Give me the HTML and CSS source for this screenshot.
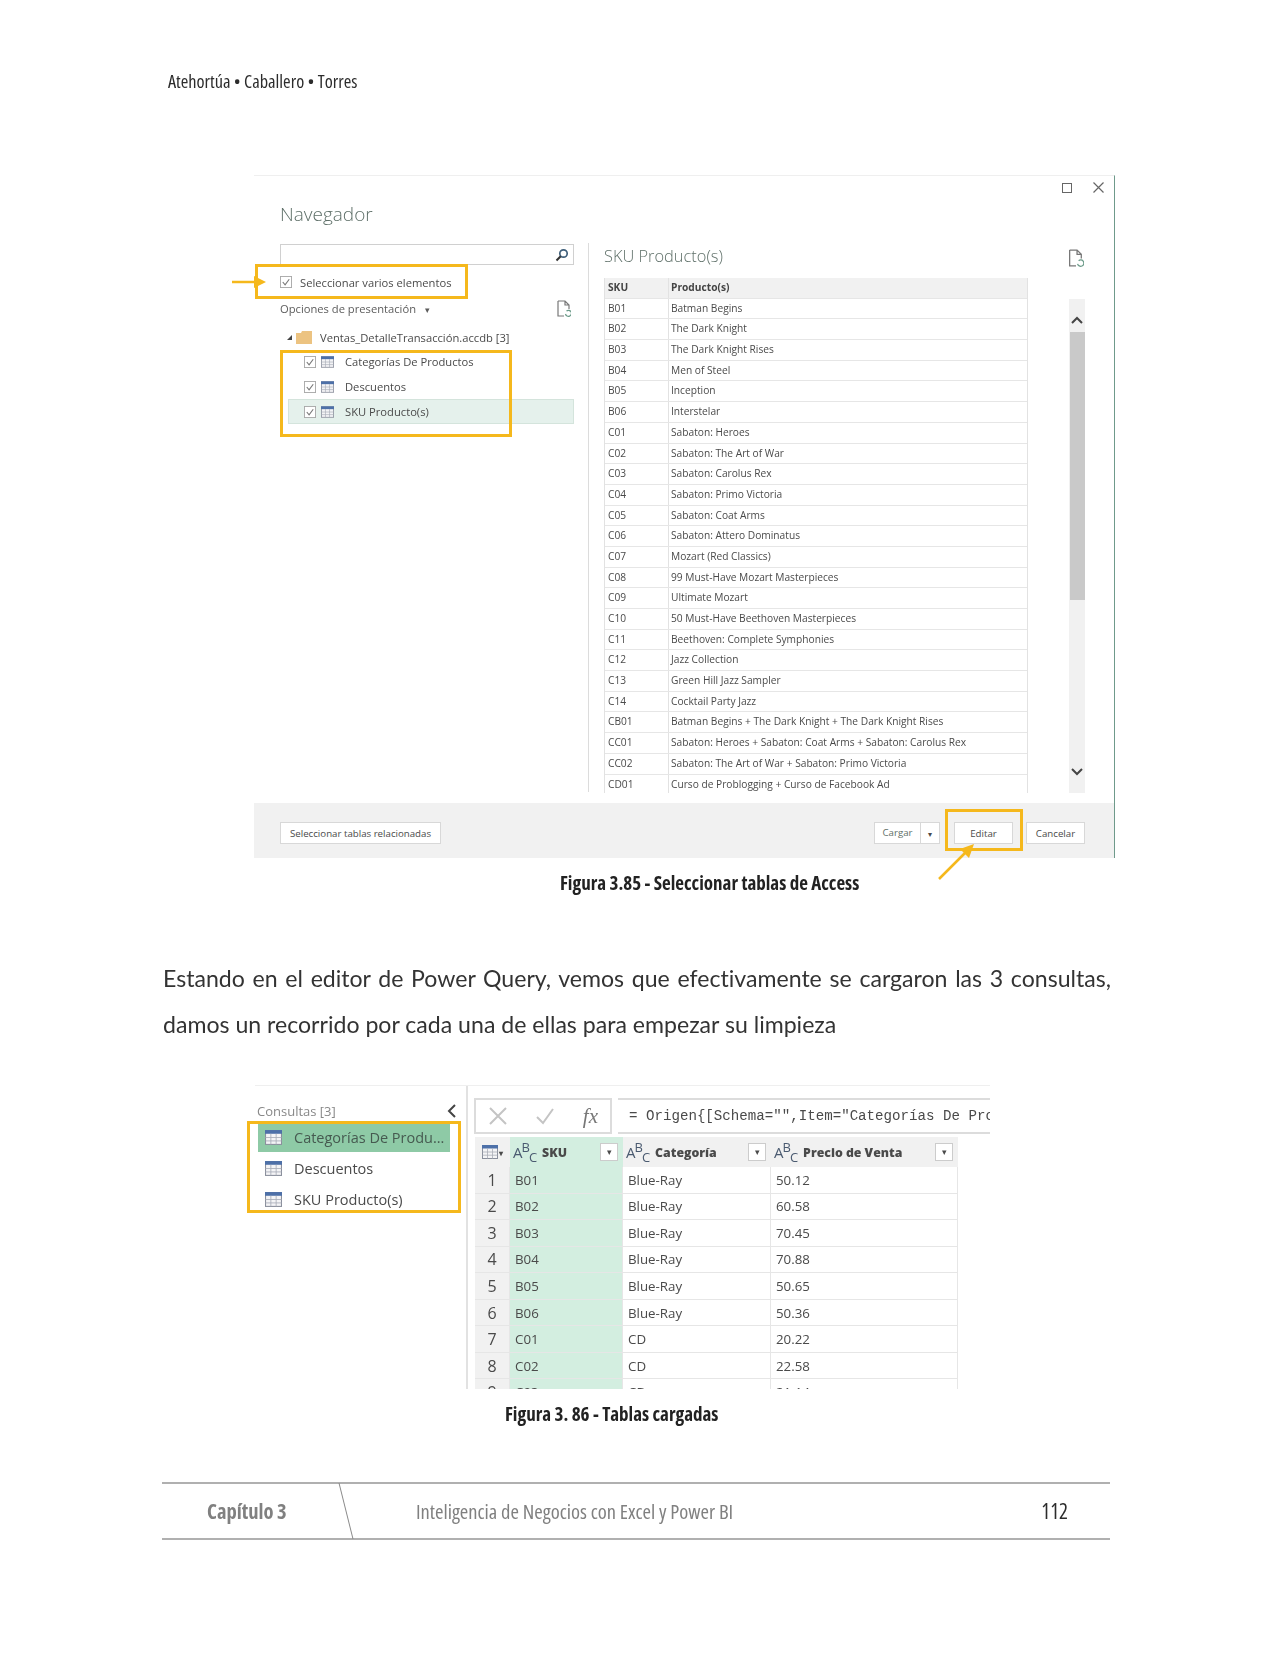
FILE: index.html
```html
<!DOCTYPE html>
<html lang="es">
<head>
  <meta charset="UTF-8">
  <title>Inteligencia de Negocios con Excel y Power BI - 112</title>
  <link rel="stylesheet" href="styles.css">
</head>
<body>

  <svg class="sprite" width="0" height="0">
    <symbol id="tbl" viewBox="0 0 16 14">
      <rect x="0.5" y="0.5" width="15" height="13" fill="#f4f4f6" stroke="#8a8f9c"/>
      <rect x="0" y="0" width="16" height="3.5" fill="#4d70a8"/>
      <path d="M5.5 3.5V13.5M10.5 3.5V13.5M0.5 7H15.5M0.5 10.2H15.5" stroke="#a9adb8" stroke-width="0.8" fill="none"/>
    </symbol>
    <symbol id="chk" viewBox="0 0 13 13">
      <rect x="0.5" y="0.5" width="12" height="12" fill="#fff" stroke="#a8a8a8"/>
      <path d="M3 6.5L5.5 9.5L10 3.5" stroke="#777" stroke-width="1.2" fill="none"/>
    </symbol>
    <symbol id="doc" viewBox="0 0 14 17">
      <path d="M1 1H8L12 5V9M1 1V16H7M8 1V5H12" stroke="#777" stroke-width="1.2" fill="none"/>
      <path d="M8.5 14a3 3 0 1 0 1-3" stroke="#6a9a88" stroke-width="1.2" fill="none"/>
    </symbol>
  </svg>

  <div class="page">
    <header class="running-head narrow">Atehortúa • Caballero • Torres</header>

    <div class="navigator shot">
      <div class="win-btns">
        <span class="win-max"></span>
        <svg class="win-close" width="11" height="11" viewBox="0 0 11 11"><path d="M0.5 0.5L10.5 10.5M10.5 0.5L0.5 10.5" stroke="#666" stroke-width="1.2"/></svg>
      </div>

      <div class="nav-body">
        <div class="nav-left">
          <h1 class="nav-title">Navegador</h1>
          <div class="search-box">
            <svg width="14" height="14" viewBox="0 0 14 14"><circle cx="8.5" cy="5.5" r="3.7" fill="none" stroke="#3f5f7a" stroke-width="1.7"/><path d="M5.7 8.3L1.5 12.5" stroke="#333" stroke-width="2"/></svg>
          </div>
          <div class="multi-select">
            <svg class="ico-chk"><use href="#chk"/></svg>
            <span>Seleccionar varios elementos</span>
          </div>
          <div class="view-options">
            <span>Opciones de presentación <i class="caret">▾</i></span>
            <svg class="ico-doc"><use href="#doc"/></svg>
          </div>
          <div class="tree-root">
            <i class="tree-arrow"></i>
            <svg class="ico-folder" width="16" height="13" viewBox="0 0 16 13"><path d="M0 2H5L6 0H16V13H0Z" fill="#ecc381"/></svg>
            <span>Ventas_DetalleTransacción.accdb [3]</span>
          </div>
          <div class="tree-row">
            <svg class="ico-chk"><use href="#chk"/></svg>
            <svg class="ico-tbl"><use href="#tbl"/></svg>
            <span>Categorías De Productos</span>
          </div>
          <div class="tree-row">
            <svg class="ico-chk"><use href="#chk"/></svg>
            <svg class="ico-tbl"><use href="#tbl"/></svg>
            <span>Descuentos</span>
          </div>
          <div class="tree-row selected">
            <svg class="ico-chk"><use href="#chk"/></svg>
            <svg class="ico-tbl"><use href="#tbl"/></svg>
            <span>SKU Producto(s)</span>
          </div>
        </div>

        <div class="nav-right">
          <div class="preview-head">
            <h2>SKU Producto(s)</h2>
            <svg class="ico-doc big"><use href="#doc"/></svg>
          </div>
          <div class="preview-body">
            <div class="sku-table">
              <div class="sku-row head"><span>SKU</span><span>Producto(s)</span></div>
              <div class="sku-row"><span>B01</span><span>Batman Begins</span></div>
              <div class="sku-row"><span>B02</span><span>The Dark Knight</span></div>
              <div class="sku-row"><span>B03</span><span>The Dark Knight Rises</span></div>
              <div class="sku-row"><span>B04</span><span>Men of Steel</span></div>
              <div class="sku-row"><span>B05</span><span>Inception</span></div>
              <div class="sku-row"><span>B06</span><span>Interstelar</span></div>
              <div class="sku-row"><span>C01</span><span>Sabaton: Heroes</span></div>
              <div class="sku-row"><span>C02</span><span>Sabaton: The Art of War</span></div>
              <div class="sku-row"><span>C03</span><span>Sabaton: Carolus Rex</span></div>
              <div class="sku-row"><span>C04</span><span>Sabaton: Primo Victoria</span></div>
              <div class="sku-row"><span>C05</span><span>Sabaton: Coat Arms</span></div>
              <div class="sku-row"><span>C06</span><span>Sabaton: Attero Dominatus</span></div>
              <div class="sku-row"><span>C07</span><span>Mozart (Red Classics)</span></div>
              <div class="sku-row"><span>C08</span><span>99 Must-Have Mozart Masterpieces</span></div>
              <div class="sku-row"><span>C09</span><span>Ultimate Mozart</span></div>
              <div class="sku-row"><span>C10</span><span>50 Must-Have Beethoven Masterpieces</span></div>
              <div class="sku-row"><span>C11</span><span>Beethoven: Complete Symphonies</span></div>
              <div class="sku-row"><span>C12</span><span>Jazz Collection</span></div>
              <div class="sku-row"><span>C13</span><span>Green Hill Jazz Sampler</span></div>
              <div class="sku-row"><span>C14</span><span>Cocktail Party Jazz</span></div>
              <div class="sku-row"><span>CB01</span><span>Batman Begins + The Dark Knight + The Dark Knight Rises</span></div>
              <div class="sku-row"><span>CC01</span><span>Sabaton: Heroes + Sabaton: Coat Arms + Sabaton: Carolus Rex</span></div>
              <div class="sku-row"><span>CC02</span><span>Sabaton: The Art of War + Sabaton: Primo Victoria</span></div>
              <div class="sku-row"><span>CD01</span><span>Curso de Problogging + Curso de Facebook Ad</span></div>
            </div>
            <div class="scrollbar">
              <svg width="12" height="8" viewBox="0 0 12 8"><path d="M1 7L6 2L11 7" stroke="#444" stroke-width="2" fill="none"/></svg>
              <div class="scroll-thumb"></div>
              <svg width="12" height="8" viewBox="0 0 12 8"><path d="M1 1L6 6L11 1" stroke="#444" stroke-width="2" fill="none"/></svg>
            </div>
          </div>
        </div>
      </div>

      <div class="nav-foot">
        <span class="btn related">Seleccionar tablas relacionadas</span>
        <span class="btn load"><b>Cargar</b><i class="caret">▾</i></span>
        <span class="btn edit">Editar</span>
        <span class="btn cancel">Cancelar</span>
      </div>

      <!-- anotaciones amarillas -->
      <div class="mark mark-select"></div>
      <div class="mark mark-tables"></div>
      <div class="mark mark-edit"></div>
      <svg class="arrow arrow-select" width="36" height="14" viewBox="0 0 36 14"><path d="M0 7H24" stroke="#f5b81c" stroke-width="2.5"/><path d="M22 1L34 7L22 13Z" fill="#f5b81c"/></svg>
      <svg class="arrow arrow-edit" width="40" height="38" viewBox="0 0 40 38"><path d="M2 36L30 8" stroke="#f5b81c" stroke-width="2.5"/><path d="M37 1L32 15L23 6Z" fill="#f5b81c"/></svg>
    </div>

    <p class="caption narrow cap-access">Figura 3.85 - Seleccionar tablas de Access</p>

    <p class="body-text">Estando en el editor de Power Query, vemos que efectivamente se cargaron las 3 consultas, damos un recorrido por cada una de ellas para empezar su limpieza</p>

    <div class="query-editor shot">
      <div class="query-pane">
        <div class="query-head">
          <span>Consultas [3]</span>
          <svg width="10" height="14" viewBox="0 0 10 14"><path d="M8 1L2 7L8 13" stroke="#444" stroke-width="2" fill="none"/></svg>
        </div>
        <div class="query-item active"><svg class="ico-tbl q"><use href="#tbl"/></svg><span>Categorías De Produ...</span></div>
        <div class="query-item"><svg class="ico-tbl q"><use href="#tbl"/></svg><span>Descuentos</span></div>
        <div class="query-item"><svg class="ico-tbl q"><use href="#tbl"/></svg><span>SKU Producto(s)</span></div>
        <div class="mark mark-queries"></div>
      </div>

      <div class="query-main">
        <div class="formula-bar">
          <div class="formula-btns">
            <svg width="20" height="18" viewBox="0 0 20 18"><path d="M2 1L18 17M18 1L2 17" stroke="#c4c4c4" stroke-width="2"/></svg>
            <svg width="20" height="18" viewBox="0 0 20 18"><path d="M2 10L8 16L18 2" stroke="#c4c4c4" stroke-width="2" fill="none"/></svg>
            <span class="fx">fx</span>
          </div>
          <div class="formula">= Origen{[Schema="",Item="Categorías De Productos",Kind="Table"]}[Data]</div>
        </div>

        <div class="grid-wrap">
          <div class="grid-row grid-head">
            <div class="cell idx">
              <svg class="ico-tbl g"><use href="#tbl"/></svg><i class="caret">▾</i>
            </div>
            <div class="cell sku"><span class="abc">A<sup>B</sup><sub>C</sub></span><b>SKU</b><i class="filter">▾</i></div>
            <div class="cell"><span class="abc">A<sup>B</sup><sub>C</sub></span><b>Categoría</b><i class="filter">▾</i></div>
            <div class="cell"><span class="abc">A<sup>B</sup><sub>C</sub></span><b>Precio de Venta</b><i class="filter">▾</i></div>
          </div>
          <div class="grid-row"><div class="cell idx">1</div><div class="cell sku">B01</div><div class="cell">Blue-Ray</div><div class="cell">50.12</div></div>
          <div class="grid-row"><div class="cell idx">2</div><div class="cell sku">B02</div><div class="cell">Blue-Ray</div><div class="cell">60.58</div></div>
          <div class="grid-row"><div class="cell idx">3</div><div class="cell sku">B03</div><div class="cell">Blue-Ray</div><div class="cell">70.45</div></div>
          <div class="grid-row"><div class="cell idx">4</div><div class="cell sku">B04</div><div class="cell">Blue-Ray</div><div class="cell">70.88</div></div>
          <div class="grid-row"><div class="cell idx">5</div><div class="cell sku">B05</div><div class="cell">Blue-Ray</div><div class="cell">50.65</div></div>
          <div class="grid-row"><div class="cell idx">6</div><div class="cell sku">B06</div><div class="cell">Blue-Ray</div><div class="cell">50.36</div></div>
          <div class="grid-row"><div class="cell idx">7</div><div class="cell sku">C01</div><div class="cell">CD</div><div class="cell">20.22</div></div>
          <div class="grid-row"><div class="cell idx">8</div><div class="cell sku">C02</div><div class="cell">CD</div><div class="cell">22.58</div></div>
          <div class="grid-row"><div class="cell idx">9</div><div class="cell sku">C03</div><div class="cell">CD</div><div class="cell">21.14</div></div>
        </div>
      </div>
    </div>

    <p class="caption narrow cap-tables">Figura 3. 86 - Tablas cargadas</p>

    <footer class="page-foot narrow">
      <span class="chapter">Capítulo 3</span>
      <svg class="slash" width="16" height="56" viewBox="0 0 16 56"><path d="M1 0L15 56" stroke="#8a8a8a" stroke-width="1"/></svg>
      <span class="book">Inteligencia de Negocios con Excel y Power BI</span>
      <span class="folio">112</span>
    </footer>
  </div>

</body>
</html>
```

FILE: styles.css
```css
* {
  margin: 0;
  padding: 0;
  box-sizing: border-box;
}

body {
  background: #fff;
  font-family: 'Open Sans', 'Liberation Sans', sans-serif;
  color: #333;
}

i {
  font-style: normal;
}

.sprite {
  position: absolute;
}

.page {
  width: 1280px;
  height: 1656px;
  padding-top: 70px;
  overflow: hidden;
  filter: blur(0.3px);
}

.narrow {
  font-family: 'Open Sans', 'Noto Sans', sans-serif;
  font-stretch: 75%;
}

.shot {
  filter: blur(0.7px);
}

.running-head {
  height: 22px;
  margin-left: 168px;
  font-size: 18.3px;
  line-height: 22px;
  color: #2c2c2c;
}

/* Navegador */
.navigator {
  position: relative;
  width: 861px;
  height: 683px;
  margin: 83px 0 0 254px;
  border-top: 1px solid #efefef;
  border-right: 1.5px solid #6f9a8b;
  display: flex;
  flex-direction: column;
}

.win-btns {
  position: absolute;
  top: 6px;
  right: 10px;
  display: flex;
  align-items: center;
  gap: 21px;
}

.win-max {
  width: 10px;
  height: 10px;
  border: 1px solid #666;
}

.nav-body {
  flex: 1;
  display: flex;
  padding-left: 26px;
}

.nav-left {
  width: 294px;
  padding-top: 26px;
  font-size: 11.2px;
  color: #4a4a4a;
}

.nav-title {
  height: 24px;
  font-size: 19px;
  font-weight: 300;
  line-height: 24px;
  color: #5f7069;
}

.search-box {
  height: 21px;
  margin-top: 18px;
  padding-right: 4px;
  border: 1px solid #d0d0d0;
  display: flex;
  align-items: center;
  justify-content: flex-end;
}

.multi-select {
  height: 20px;
  margin-top: 7px;
  display: flex;
  align-items: center;
  gap: 8px;
}

.ico-chk {
  width: 12px;
  height: 12px;
  flex: none;
}

.view-options {
  height: 18px;
  margin-top: 7px;
  padding-right: 3px;
  display: flex;
  align-items: center;
  justify-content: space-between;
  color: #5c5c5c;
}

.caret {
  font-size: 9px;
  margin-left: 6px;
}

.ico-doc {
  width: 14px;
  height: 17px;
}

.ico-doc.big {
  width: 16px;
  height: 18px;
}

.tree-root {
  height: 20px;
  margin-top: 10px;
  margin-bottom: 2px;
  padding-left: 7px;
  display: flex;
  align-items: center;
}

.tree-arrow {
  width: 0;
  height: 0;
  border-bottom: 5px solid #444;
  border-left: 5px solid transparent;
  margin-right: 4px;
}

.ico-folder {
  margin-right: 8px;
}

.tree-row {
  height: 25px;
  margin-left: 8px;
  padding-left: 16px;
  display: flex;
  align-items: center;
}

.tree-row.selected {
  background: #e5f1ec;
  border: 1px solid #d4e4dc;
  padding-left: 15px;
}

.ico-tbl {
  width: 13px;
  height: 12px;
  margin-left: 5px;
  margin-right: 11px;
  flex: none;
}

.nav-right {
  width: 497px;
  height: 549px;
  margin: 67px 0 0 14px;
  padding-left: 15px;
  border-left: 1px solid #dcdcdc;
}

.preview-head {
  width: 480px;
  height: 35px;
  display: flex;
  align-items: center;
  justify-content: space-between;
}

.preview-head h2 {
  font-size: 16.4px;
  font-weight: 300;
  color: #5f7069;
  margin-top: -10px;
}

.preview-head .ico-doc {
  margin-top: -6px;
}

.preview-body {
  width: 481px;
  height: 515px;
  display: flex;
  justify-content: space-between;
}

.sku-table {
  width: 424px;
  height: 515px;
  overflow: hidden;
  border-left: 1px solid #e2e2e2;
  border-right: 1px solid #e2e2e2;
  font-size: 10.2px;
  color: #4a4a4a;
}

.sku-row {
  display: grid;
  grid-template-columns: 63px 1fr;
  height: 20.7px;
  border-bottom: 1.5px solid #e6e6e6;
  line-height: 19.5px;
  white-space: nowrap;
}

.sku-row span {
  padding-left: 3px;
}

.sku-row span + span {
  border-left: 1px solid #e2e2e2;
  padding-left: 2px;
}

.sku-row.head {
  background: #f1f1f1;
  font-weight: 700;
  color: #444;
}

.scrollbar {
  width: 16px;
  height: 494px;
  margin-top: 21px;
  background: #f1f1f1;
  display: flex;
  flex-direction: column;
  align-items: center;
  padding-top: 17px;
}

.scroll-thumb {
  width: 15px;
  height: 268px;
  margin-top: 8px;
  margin-bottom: 168px;
  background: #c9c9c9;
}

.nav-foot {
  height: 55px;
  padding: 5px 29px 0 26px;
  background: #f1f1f1;
  display: flex;
  align-items: center;
  font-size: 9.7px;
  color: #4a4a4a;
}

.btn {
  height: 22px;
  background: #fff;
  border: 1px solid #d8d8d8;
  display: flex;
  align-items: center;
  justify-content: center;
}

.related {
  width: 161px;
  margin-right: auto;
}

.load {
  width: 66px;
  margin-right: 14px;
}

.load b {
  font-weight: 400;
  flex: 1;
  text-align: center;
  color: #5f7069;
  border-right: 1px solid #d8d8d8;
  line-height: 20px;
}

.load .caret {
  width: 18px;
  margin: 0;
  text-align: center;
  font-size: 8px;
}

.edit {
  width: 59px;
  margin-right: 13px;
}

.cancel {
  width: 59px;
}

/* marcos amarillos sobre las capturas */
.mark {
  position: absolute;
  border: 3px solid #f5b81c;
}

.mark-select {
  left: 1px;
  top: 88px;
  width: 213px;
  height: 35px;
}

.mark-tables {
  left: 26px;
  top: 174px;
  width: 232px;
  height: 87px;
}

.mark-edit {
  left: 691px;
  top: 633px;
  width: 78px;
  height: 42px;
}

.mark-queries {
  left: -8px;
  top: 35px;
  width: 214px;
  height: 92px;
}

.arrow {
  position: absolute;
}

.arrow-select {
  left: -22px;
  top: 99px;
}

.arrow-edit {
  left: 683px;
  top: 667px;
}

.caption {
  height: 24px;
  font-size: 19px;
  font-weight: 700;
  line-height: 24px;
  color: #222;
  white-space: nowrap;
}

.cap-access {
  margin: 13px 0 0 560px;
}

.cap-tables {
  margin: 13px 0 0 505px;
}

.body-text {
  width: 948px;
  margin: 60px 0 0 163px;
  font-family: 'Lato', sans-serif;
  font-size: 23.1px;
  font-variant-ligatures: none;
  line-height: 46px;
  text-align: justify;
  color: #333;
}

/* Power Query */
.query-editor {
  width: 735px;
  height: 304px;
  margin: 38px 0 0 255px;
  border-top: 1px solid #efefef;
  display: flex;
}

.query-pane {
  position: relative;
  width: 213px;
  border-right: 2px solid #e2e2e2;
  font-size: 14.5px;
  color: #4a4a4a;
}

.query-head {
  height: 24px;
  margin-top: 13px;
  padding: 0 9px 0 2px;
  display: flex;
  align-items: center;
  justify-content: space-between;
  font-size: 13px;
  color: #888;
}

.query-item {
  width: 192px;
  height: 30.5px;
  margin-left: 3px;
  padding-left: 7px;
  display: flex;
  align-items: center;
  white-space: nowrap;
}

.query-item.active {
  background: #8ecaa6;
  height: 29px;
  margin-bottom: 1.5px;
  color: #465a50;
}

.ico-tbl.q {
  width: 17px;
  height: 15px;
  margin-left: 0;
  margin-right: 12px;
}

.query-main {
  width: 522px;
  padding: 12px 0 0 6px;
}

.formula-bar {
  height: 36px;
  display: flex;
  gap: 6px;
}

.formula-btns {
  width: 138px;
  border: 2px solid #dcdcdc;
  display: flex;
  align-items: center;
  justify-content: space-between;
  padding: 0 12px;
}

.fx {
  font-family: 'Liberation Serif', serif;
  font-style: italic;
  font-size: 21px;
  color: #777;
}

.formula {
  flex: 1;
  border-top: 2px solid #dcdcdc;
  border-bottom: 2px solid #dcdcdc;
  padding-left: 11px;
  font-family: 'Liberation Mono', monospace;
  font-size: 14.15px;
  line-height: 32px;
  white-space: nowrap;
  overflow: hidden;
  color: #4a4a4a;
}

.grid-wrap {
  width: 483px;
  height: 252px;
  margin: 3px 0 0 1px;
  overflow: hidden;
  font-size: 13.3px;
  color: #4a4a4a;
}

.grid-row {
  display: grid;
  grid-template-columns: 35px 113px 148px 187px;
  height: 26.55px;
  border-bottom: 1.5px solid #e6e6e6;
}

.grid-head {
  height: 30px;
  background: #f1f1f1;
  border-bottom: none;
  font-weight: 700;
}

.cell {
  padding-left: 5px;
  border-right: 1.5px solid #e6e6e6;
  display: flex;
  align-items: center;
  white-space: nowrap;
}

.grid-head .cell {
  position: relative;
  padding-left: 3px;
  padding-top: 1px;
  border-right: none;
}

.cell b {
  font-size: 12.3px;
  margin-left: 6px;
  color: #4a4a4a;
}

.cell.idx {
  justify-content: center;
  padding: 0;
  background: #f1f1f1;
  font-size: 16px;
}

.cell.sku {
  background: #d3eee0;
}

.ico-tbl.g {
  width: 16px;
  height: 14px;
  margin: 0;
}

.idx .caret {
  margin-left: 1px;
  font-size: 8px;
}

.abc {
  font-size: 15px;
  line-height: 1;
  font-weight: 400;
  letter-spacing: -1px;
  color: #4a5a70;
}

.abc sup,
.abc sub {
  font-size: 13px;
  line-height: 0;
}

.filter {
  position: absolute;
  right: 5px;
  top: 6px;
  width: 18px;
  height: 18px;
  background: #fff;
  border: 1px solid #ccc;
  font-size: 9px;
  font-weight: 400;
  line-height: 15px;
  text-align: center;
}

/* Pie de pagina */
.page-foot {
  width: 948px;
  height: 58px;
  margin: 56px 0 0 162px;
  border-top: 2px solid #b0b0b0;
  border-bottom: 2px solid #b0b0b0;
  display: flex;
  align-items: center;
  font-size: 20.5px;
  color: #808080;
}

.chapter {
  width: 176px;
  padding-left: 45px;
  font-weight: 700;
}

.slash {
  flex: none;
}

.book {
  flex: 1;
  margin-left: 62px;
}

.folio {
  margin-right: 42px;
  font-size: 21px;
  color: #2c2c2c;
}
```
